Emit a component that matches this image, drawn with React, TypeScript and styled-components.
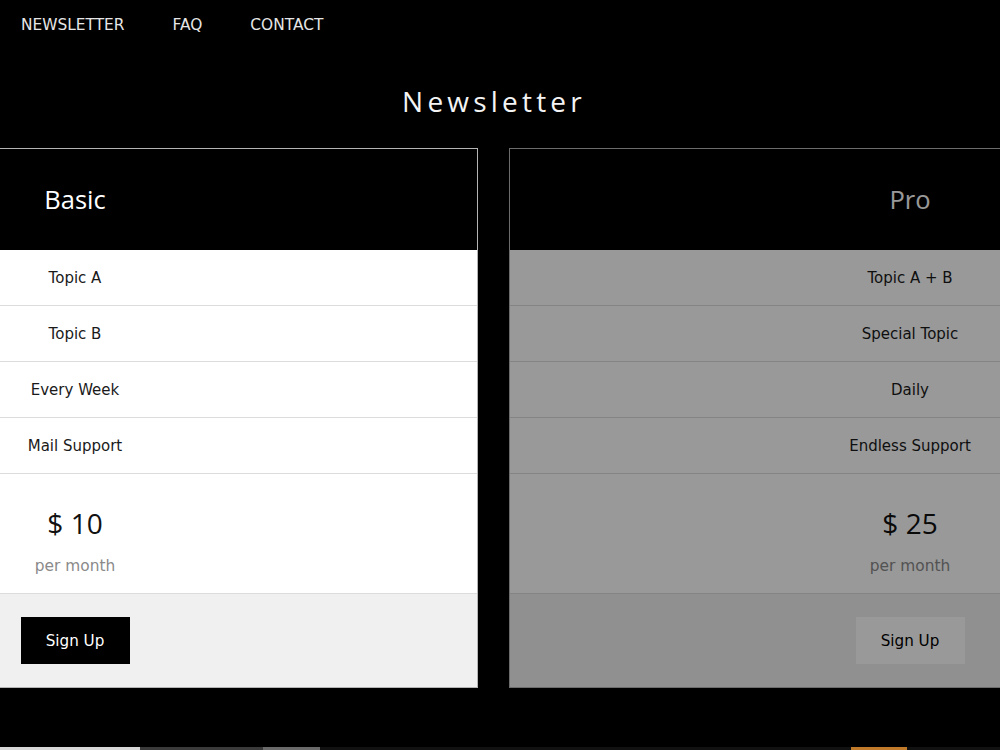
import React from "react";
import styled, { createGlobalStyle } from "styled-components";

const GlobalStyle = createGlobalStyle`
  html, body {
    margin: 0;
    padding: 0;
    background: #000;
  }
  body {
    width: 1000px;
    height: 750px;
    overflow: hidden;
    font-family: "DejaVu Sans", Verdana, sans-serif;
  }
  * { box-sizing: border-box; }
`;

const Page = styled.div`
  display: flex;
  flex-direction: column;
  width: 1000px;
  height: 750px;
  background: #000;
  overflow: hidden;
`;

const Nav = styled.nav`
  display: flex;
  align-items: center;
  gap: 48px;
  height: 49px;
  padding-left: 21px;
`;

const NavLink = styled.a`
  font-family: "DejaVu Sans", Verdana, sans-serif;
  font-size: 15.4px;
  color: #e6e6e6;
  text-decoration: none;
`;

const Title = styled.h1`
  margin: 32px 0 27px;
  padding-right: 12px;
  height: 40px;
  line-height: 40px;
  text-align: center;
  font-family: "Open Sans", sans-serif;
  font-weight: 400;
  font-size: 28px;
  letter-spacing: 4.2px;
  color: #f4f4f4;
`;

const Plans = styled.div`
  display: flex;
  gap: 31px;
  margin-left: -1px;
`;

const Card = styled.section<{ $width: number; $dim?: boolean }>`
  flex: 0 0 ${(p) => p.$width}px;
  display: flex;
  flex-direction: column;
  border: 1px solid #b4b4b4;
  background: #fff;
  opacity: ${(p) => (p.$dim ? 0.6 : 1)};
`;

const Header = styled.header`
  display: flex;
  align-items: center;
  height: 101px;
  padding-bottom: 2px;
  background: #000;
`;

const Cell = styled.div<{ $inset: number }>`
  width: 150px;
  margin-left: ${(p) => p.$inset}px;
  display: flex;
  flex-direction: column;
  align-items: center;
  text-align: center;
`;

const PlanName = styled.h2`
  margin: 0;
  font-family: "Open Sans", sans-serif;
  font-weight: 400;
  font-size: 25.5px;
  color: #fff;
`;

const Feature = styled.div`
  display: flex;
  align-items: center;
  height: 56px;
  border-bottom: 1px solid #dcdcdc;
  font-size: 15px;
  color: #1a1a1a;
`;

const PriceBlock = styled.div`
  display: flex;
  height: 120px;
  padding-top: 31px;
  border-bottom: 1px solid #dcdcdc;
`;

const Amount = styled.div`
  font-family: "Open Sans", sans-serif;
  font-size: 28px;
  line-height: 36px;
  color: #111;
`;

const Period = styled.div`
  margin-top: 15px;
  font-size: 15.4px;
  line-height: 20px;
  color: #8a8a8a;
`;

const Footer = styled.div`
  display: flex;
  height: 93px;
  padding-top: 23px;
  background: #f0f0f0;
`;

const SignUp = styled.button<{ $light?: boolean }>`
  width: 109px;
  height: 47px;
  border: none;
  padding: 0;
  background: ${(p) => (p.$light ? "#fff" : "#000")};
  color: ${(p) => (p.$light ? "#000" : "#fff")};
  font-family: "DejaVu Sans", Verdana, sans-serif;
  font-size: 15.2px;
  cursor: pointer;
`;

const NextSection = styled.div`
  display: flex;
  margin-top: auto;
  height: 3px;
`;

const Swatch = styled.div<{ $color: string; $w: number }>`
  flex: 0 0 ${(p) => p.$w}px;
  background: ${(p) => p.$color};
`;

type Plan = {
  name: string;
  features: string[];
  price: string;
  width: number;
  inset: number;
  dim?: boolean;
};

const plans: Plan[] = [
  {
    name: "Basic",
    features: ["Topic A", "Topic B", "Every Week", "Mail Support"],
    price: "$ 10",
    width: 479,
    inset: 0,
  },
  {
    name: "Pro",
    features: ["Topic A + B", "Special Topic", "Daily", "Endless Support"],
    price: "$ 25",
    width: 540,
    inset: 325,
    dim: true,
  },
];

const strip: [string, number][] = [
  ["#d8d8d8", 140],
  ["#3a3a3a", 123],
  ["#6a6a6a", 57],
  ["#111", 531],
  ["#c07a2a", 56],
  ["#111", 93],
];

export default function App() {
  return (
    <>
      <GlobalStyle />
      <Page>
        <Nav>
          <NavLink href="#newsletter">NEWSLETTER</NavLink>
          <NavLink href="#faq">FAQ</NavLink>
          <NavLink href="#contact">CONTACT</NavLink>
        </Nav>
        <Title>Newsletter</Title>
        <Plans>
          {plans.map((plan) => (
            <Card key={plan.name} $width={plan.width} $dim={plan.dim}>
              <Header>
                <Cell $inset={plan.inset}>
                  <PlanName>{plan.name}</PlanName>
                </Cell>
              </Header>
              {plan.features.map((f) => (
                <Feature key={f}>
                  <Cell $inset={plan.inset}>{f}</Cell>
                </Feature>
              ))}
              <PriceBlock>
                <Cell $inset={plan.inset}>
                  <Amount>{plan.price}</Amount>
                  <Period>per month</Period>
                </Cell>
              </PriceBlock>
              <Footer>
                <Cell $inset={plan.inset}>
                  <SignUp $light={plan.dim}>Sign Up</SignUp>
                </Cell>
              </Footer>
            </Card>
          ))}
        </Plans>
        <NextSection>
          {strip.map(([c, w], i) => (
            <Swatch key={i} $color={c} $w={w} />
          ))}
        </NextSection>
      </Page>
    </>
  );
}
